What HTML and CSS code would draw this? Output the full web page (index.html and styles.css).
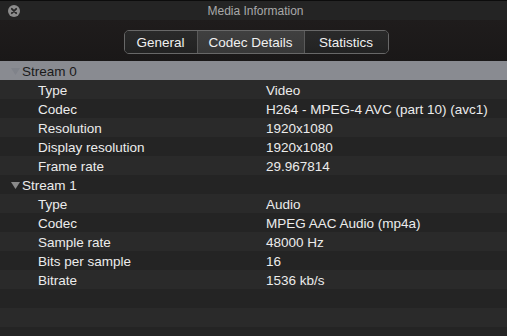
FILE: index.html
```html
<!DOCTYPE html>
<html>
<head>
    <title>Media Information</title>
    <meta charset="UTF-8">
    <link rel="stylesheet" href="styles.css">
</head>
<body>
    <div class="window">
        <!-- Barre de titre -->
        <div class="titlebar">
            <span class="close">
                <svg width="12" height="12" viewBox="0 0 12 12">
                    <circle cx="6" cy="6" r="6" fill="#8c8c8c"/>
                    <path d="M3.8 3.8 L8.2 8.2 M8.2 3.8 L3.8 8.2" stroke="#262626" stroke-width="1.8" stroke-linecap="round"/>
                </svg>
            </span>
            <span class="title">Media Information</span>
        </div>

        <!-- Onglets -->
        <div class="toolbar">
            <div class="segmented">
                <span class="segment seg-general">General</span>
                <span class="segment seg-codec active">Codec Details</span>
                <span class="segment seg-stats">Statistics</span>
            </div>
        </div>

        <!-- Liste des flux -->
        <div class="outline">
            <div class="row group selected">
                <svg class="disclosure" width="9" height="7" viewBox="0 0 9 7"><path d="M0 0 H9 L4.5 7 Z" fill="#80838a"/></svg>
                <span class="label">Stream 0</span><span class="value"></span>
            </div>
            <div class="row"><span class="label child">Type</span><span class="value">Video</span></div>
            <div class="row"><span class="label child">Codec</span><span class="value">H264 - MPEG-4 AVC (part 10) (avc1)</span></div>
            <div class="row"><span class="label child">Resolution</span><span class="value">1920x1080</span></div>
            <div class="row"><span class="label child">Display resolution</span><span class="value">1920x1080</span></div>
            <div class="row"><span class="label child">Frame rate</span><span class="value">29.967814</span></div>
            <div class="row group">
                <svg class="disclosure" width="9" height="7" viewBox="0 0 9 7"><path d="M0 0 H9 L4.5 7 Z" fill="#8a8a8a"/></svg>
                <span class="label">Stream 1</span><span class="value"></span>
            </div>
            <div class="row"><span class="label child">Type</span><span class="value">Audio</span></div>
            <div class="row"><span class="label child">Codec</span><span class="value">MPEG AAC Audio (mp4a)</span></div>
            <div class="row"><span class="label child">Sample rate</span><span class="value">48000 Hz</span></div>
            <div class="row"><span class="label child">Bits per sample</span><span class="value">16</span></div>
            <div class="row"><span class="label child">Bitrate</span><span class="value">1536 kb/s</span></div>
            <div class="row"></div>
            <div class="row"></div>
            <div class="row"></div>
        </div>
    </div>
</body>
</html>
```

FILE: styles.css
```css
html, body {
    margin: 0;
    padding: 0;
    background: #1e1d1d;
}
body {
    font-family: "Liberation Sans", Arial, sans-serif;
    width: 507px;
    height: 336px;
    overflow: hidden;
}
.window {
    display: flex;
    flex-direction: column;
    height: 336px;
}
.titlebar {
    position: relative;
    flex-shrink: 0;
    height: 20px;
    background: #242424;
    border-top: 1px solid #0c0c0c;
    box-sizing: border-box;
    display: flex;
    align-items: center;
    justify-content: center;
}
.close {
    position: absolute;
    left: 8px;
    top: 4px;
    width: 12px;
    height: 12px;
}
.close svg {
    display: block;
}
.title {
    color: #a9a9a9;
    font-size: 12px;
    margin-left: 4px;
    padding-top: 1px;
}
.toolbar {
    flex-shrink: 0;
    height: 41px;
    background: linear-gradient(to bottom, #1f1c1c, #1a1818);
    display: flex;
    justify-content: center;
    padding-top: 10px;
    box-sizing: border-box;
}
.segmented {
    display: flex;
    height: 24px;
    margin-left: 5px;
    border: 1px solid #686868;
    border-radius: 5px;
    overflow: hidden;
    box-sizing: border-box;
}
.segment {
    display: flex;
    align-items: center;
    justify-content: center;
    color: #f0f0f0;
    font-size: 13.5px;
    background: linear-gradient(to bottom, #2a2a2a, #222222);
    border-left: 1px solid #5a5a5a;
}
.segment:first-child {
    border-left: none;
}
.seg-general {
    width: 72px;
}
.seg-codec {
    width: 106px;
}
.seg-stats {
    width: 83px;
}
.segment.active {
    background: linear-gradient(to bottom, #404040, #383838);
}
.outline {
    flex: 1;
    overflow: hidden;
}
.row {
    display: flex;
    align-items: center;
    height: 19px;
    padding-top: 2px;
    box-sizing: border-box;
    color: #ececec;
    font-size: 13.5px;
    background: #242424;
}
.row:nth-child(even) {
    background: #2a2a2a;
}
.row.selected {
    background: #898b91;
    color: #1a1a1a;
}
.disclosure {
    display: block;
    margin-left: 11px;
    margin-right: 2px;
}
.label {
    width: 244px;
}
.label.child {
    padding-left: 38px;
    width: 228px;
}
.value {
    flex: 1;
}
```
